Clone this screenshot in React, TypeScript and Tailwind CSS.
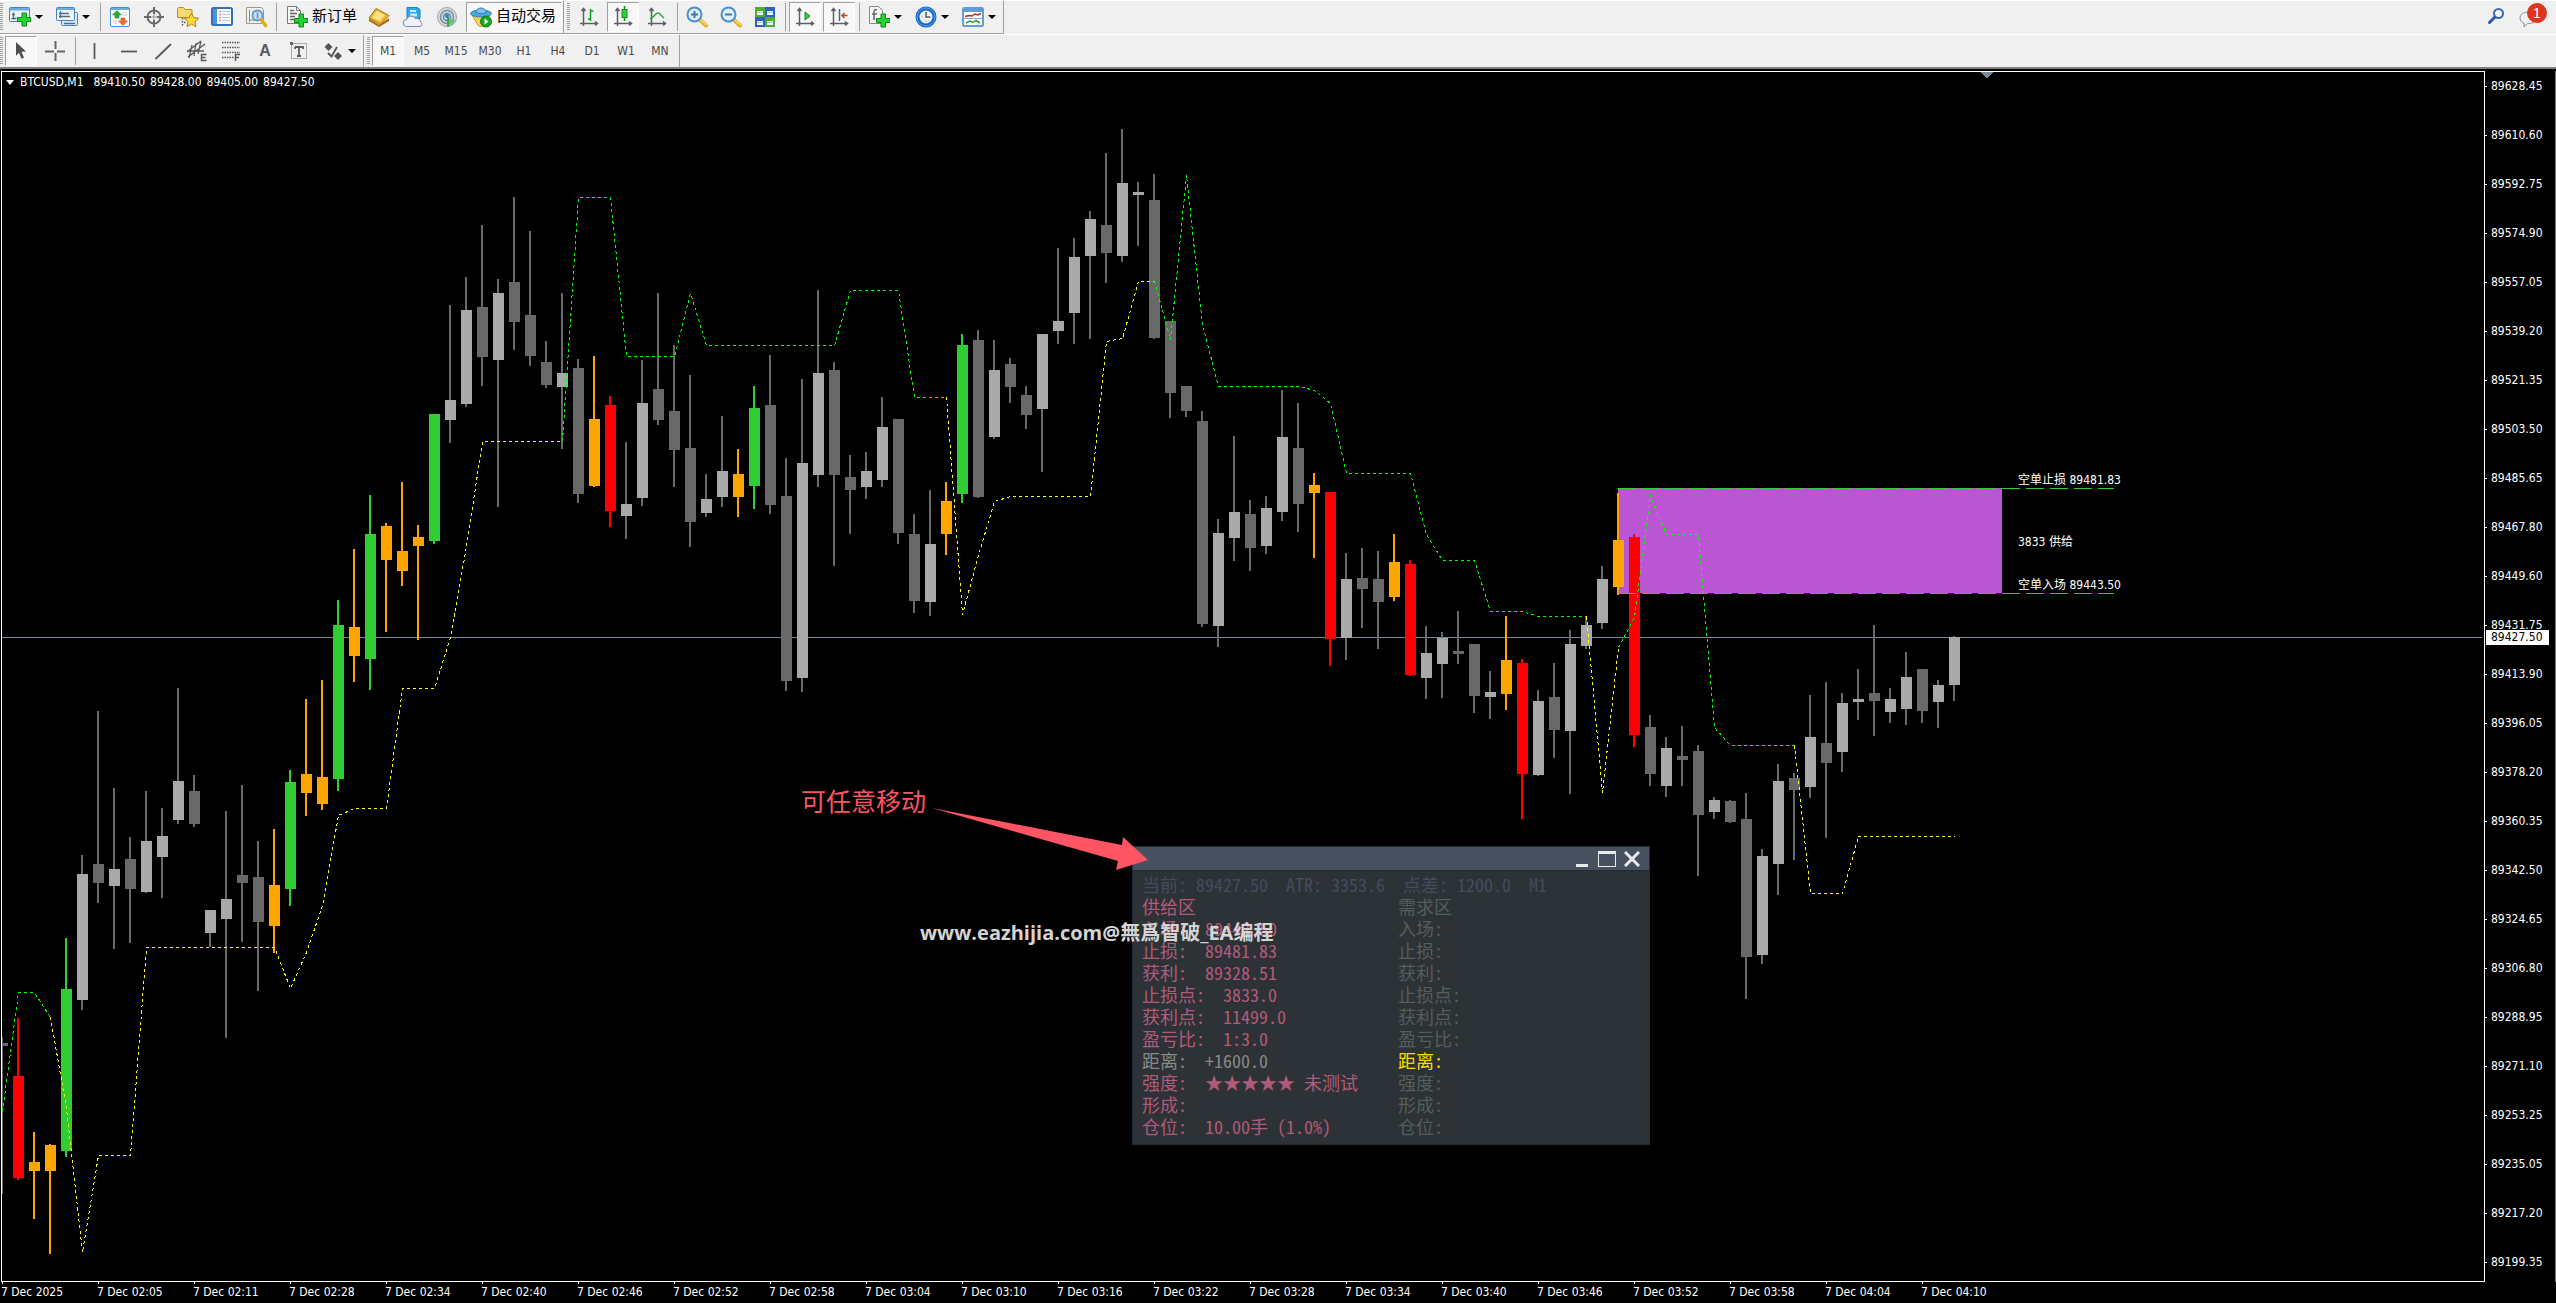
import React from "react";
import clsx from "clsx";

type CandleKind = "up" | "down" | "bull" | "bear" | "wait";
// kind, high, low, body top, body bottom
type Candle = [CandleKind, number, number, number, number];

interface TrailSegment {
  side: "sell" | "buy";
  points: [number, number][];
}

interface PanelRow {
  label: string;
  value: string;
  supplyClass: string;
  demandClass: string;
}

const BAR_STEP = 16;

const candles: Candle[] = [
  ["down", 1037, 1194, 1043, 1046],
  ["bear", 1018, 1180, 1076, 1178],
  ["wait", 1132, 1219, 1162, 1171],
  ["wait", 1144, 1254, 1145, 1171],
  ["bull", 938, 1157, 989, 1151],
  ["up", 855, 1010, 874, 1000],
  ["down", 711, 903, 864, 883],
  ["up", 788, 949, 869, 886],
  ["down", 837, 943, 859, 889],
  ["up", 791, 893, 841, 892],
  ["up", 808, 898, 836, 857],
  ["up", 688, 824, 781, 820],
  ["down", 775, 827, 791, 824],
  ["up", 910, 947, 910, 933],
  ["up", 811, 1038, 899, 919],
  ["down", 785, 942, 875, 883],
  ["down", 841, 991, 877, 922],
  ["wait", 829, 953, 885, 926],
  ["bull", 770, 906, 782, 889],
  ["wait", 699, 816, 774, 793],
  ["wait", 680, 810, 777, 804],
  ["bull", 600, 791, 625, 779],
  ["wait", 549, 682, 627, 656],
  ["bull", 495, 690, 534, 659],
  ["wait", 523, 632, 526, 560],
  ["wait", 482, 586, 551, 571],
  ["wait", 525, 640, 537, 546],
  ["bull", 414, 544, 414, 541],
  ["up", 305, 443, 400, 420],
  ["up", 277, 407, 310, 404],
  ["down", 225, 386, 307, 357],
  ["up", 279, 507, 293, 360],
  ["down", 197, 350, 282, 322],
  ["down", 231, 366, 315, 356],
  ["down", 341, 388, 362, 385],
  ["up", 293, 449, 373, 387],
  ["down", 359, 503, 368, 494],
  ["wait", 356, 487, 419, 486],
  ["bear", 396, 527, 405, 511],
  ["up", 442, 539, 504, 516],
  ["up", 360, 506, 403, 498],
  ["down", 293, 425, 389, 420],
  ["down", 345, 487, 411, 450],
  ["down", 375, 547, 448, 522],
  ["up", 474, 517, 499, 513],
  ["up", 416, 507, 471, 497],
  ["wait", 449, 517, 474, 497],
  ["bull", 386, 509, 408, 486],
  ["down", 355, 514, 405, 505],
  ["down", 458, 691, 496, 681],
  ["up", 379, 692, 463, 678],
  ["up", 290, 487, 373, 475],
  ["down", 362, 566, 370, 475],
  ["down", 455, 534, 477, 490],
  ["up", 452, 499, 471, 487],
  ["up", 397, 487, 427, 480],
  ["down", 419, 544, 419, 533],
  ["down", 514, 613, 534, 601],
  ["up", 490, 616, 544, 602],
  ["wait", 482, 555, 501, 534],
  ["bull", 334, 503, 345, 494],
  ["down", 330, 498, 340, 497],
  ["up", 340, 439, 370, 437],
  ["down", 358, 403, 364, 387],
  ["down", 386, 429, 395, 415],
  ["up", 334, 472, 334, 409],
  ["up", 248, 344, 321, 331],
  ["up", 238, 344, 257, 313],
  ["up", 211, 339, 219, 256],
  ["down", 153, 283, 225, 253],
  ["up", 129, 262, 183, 256],
  ["up", 182, 246, 192, 195],
  ["down", 174, 339, 200, 338],
  ["down", 321, 418, 321, 393],
  ["down", 386, 417, 386, 411],
  ["down", 411, 627, 421, 624],
  ["up", 519, 647, 533, 626],
  ["up", 436, 561, 512, 538],
  ["down", 500, 571, 514, 548],
  ["up", 496, 554, 508, 546],
  ["up", 390, 521, 437, 512],
  ["down", 403, 532, 448, 504],
  ["wait", 473, 558, 485, 493],
  ["bear", 492, 666, 492, 639],
  ["up", 553, 660, 579, 638],
  ["down", 548, 628, 578, 589],
  ["down", 551, 649, 579, 602],
  ["wait", 534, 601, 562, 597],
  ["bear", 560, 676, 564, 675],
  ["up", 626, 699, 653, 678],
  ["up", 632, 698, 638, 664],
  ["down", 611, 664, 651, 654],
  ["down", 644, 713, 644, 696],
  ["up", 671, 719, 692, 697],
  ["wait", 616, 710, 660, 694],
  ["bear", 659, 819, 663, 774],
  ["up", 690, 776, 701, 775],
  ["down", 663, 758, 697, 730],
  ["up", 630, 794, 644, 731],
  ["up", 616, 649, 625, 646],
  ["up", 566, 629, 579, 623],
  ["wait", 493, 595, 540, 587],
  ["bear", 534, 747, 537, 735],
  ["down", 715, 786, 727, 774],
  ["up", 737, 797, 748, 786],
  ["down", 726, 786, 756, 760],
  ["down", 745, 876, 751, 815],
  ["up", 797, 819, 800, 812],
  ["down", 800, 823, 801, 822],
  ["down", 793, 999, 819, 957],
  ["up", 849, 964, 856, 955],
  ["up", 764, 895, 781, 864],
  ["down", 773, 860, 778, 790],
  ["up", 695, 798, 737, 787],
  ["down", 682, 838, 743, 763],
  ["up", 693, 772, 703, 752],
  ["up", 669, 720, 699, 702],
  ["down", 625, 736, 693, 701],
  ["up", 688, 723, 699, 712],
  ["up", 652, 725, 677, 709],
  ["down", 669, 723, 669, 711],
  ["up", 680, 728, 685, 702],
  ["up", 636, 701, 637, 685],
];

const bodyClass: Record<CandleKind, string> = {
  up: "fill-[#a9a9a9]",
  down: "fill-[#696969]",
  bull: "fill-[#32cd32]",
  bear: "fill-[#ff0000]",
  wait: "fill-[#ffa500]",
};

const wickClass: Record<CandleKind, string> = {
  ...bodyClass,
  up: "fill-[#696969]",
};

// Trailing stop, points are [bar index, y]
const trail: TrailSegment[] = [
  { side: "sell", points: [[0, 1111], [1, 992], [2, 992], [3, 1017]] },
  {
    side: "buy",
    points: [
      [3, 1017], [4, 1108], [5, 1252], [6, 1155], [8, 1155], [9, 947], [17, 947], [18, 988], [19, 952], [20, 905],
      [21, 815], [22, 808], [24, 808], [25, 688], [27, 688], [28, 637], [29, 546], [30, 441], [35, 441],
    ],
  },
  {
    side: "sell",
    points: [
      [35, 441], [36, 197], [38, 197], [39, 356], [42, 356], [43, 293], [44, 345], [52, 345], [53, 290], [56, 290],
      [57, 397], [59, 397],
    ],
  },
  {
    side: "buy",
    points: [
      [59, 397], [60, 614], [61, 555], [62, 501], [63, 496], [68, 496], [69, 341], [70, 338], [71, 281], [72, 281],
    ],
  },
  {
    side: "sell",
    points: [
      [72, 281], [73, 339], [74, 175], [75, 324], [76, 386], [81, 386], [82, 390], [83, 403], [84, 473], [88, 473],
      [89, 534], [90, 560], [92, 560], [93, 611], [95, 611], [96, 616], [99, 616],
    ],
  },
  { side: "buy", points: [[99, 616], [100, 792], [101, 647]] },
  {
    side: "sell",
    points: [[101, 647], [102, 617], [103, 495], [104, 534], [106, 534], [107, 727], [108, 745], [112, 745]],
  },
  { side: "buy", points: [[112, 745], [113, 893], [115, 893], [116, 836], [122, 836]] },
];

const prices = [
  "89628.45", "89610.60", "89592.75", "89574.90", "89557.05", "89539.20", "89521.35", "89503.50", "89485.65",
  "89467.80", "89449.60", "89431.75", "89413.90", "89396.05", "89378.20", "89360.35", "89342.50", "89324.65",
  "89306.80", "89288.95", "89271.10", "89253.25", "89235.05", "89217.20", "89199.35",
];

const times = [
  "2025", "02:05", "02:11", "02:28", "02:34", "02:40", "02:46", "02:52", "02:58", "03:04", "03:10", "03:16", "03:22",
  "03:28", "03:34", "03:40", "03:46", "03:52", "03:58", "04:04", "04:10",
];

const timeframes = ["M1", "M5", "M15", "M30", "H1", "H4", "D1", "W1", "MN"];

const PINK = "text-[#b35a7b]";
const MUTED = "text-[#545e5b]";

const panelRows: PanelRow[] = [
  { label: "入场:", value: "89443.50", supplyClass: PINK, demandClass: MUTED },
  { label: "止损:", value: "89481.83", supplyClass: PINK, demandClass: MUTED },
  { label: "获利:", value: "89328.51", supplyClass: PINK, demandClass: MUTED },
  { label: "止损点:", value: "3833.0", supplyClass: PINK, demandClass: MUTED },
  { label: "获利点:", value: "11499.0", supplyClass: PINK, demandClass: MUTED },
  { label: "盈亏比:", value: "1:3.0", supplyClass: PINK, demandClass: MUTED },
  { label: "距离:", value: "+1600.0", supplyClass: "text-[#898985]", demandClass: "text-[#ffd700]" },
  { label: "强度:", value: "★★★★★ 未测试", supplyClass: PINK, demandClass: MUTED },
  { label: "形成:", value: "", supplyClass: PINK, demandClass: MUTED },
  { label: "仓位:", value: "10.00手 (1.0%)", supplyClass: PINK, demandClass: MUTED },
];

/* ---------- toolbar icons ---------- */

const Icon: React.FC<{ children: React.ReactNode }> = ({ children }) => (
  <svg viewBox="0 0 22 22" className="size-[22px] shrink-0" fill="none" aria-hidden="true">
    {children}
  </svg>
);

const Plus: React.FC = () => (
  <path d="M13 7h4.500v4.500h4.500v4h-4.500v4.500H13v-4.500H8.500v-4H13z" fill="#22d432" stroke="#0b8a16" strokeWidth="1" />
);

const NewChartIcon = () => (
  <Icon>
    <rect x="0.500" y="1.500" width="20" height="14" rx="1" fill="#eaf4ff" stroke="#3f86c8" />
    <path d="M1 2h19v2.500H1z" fill="#6aaae2" />
    <path d="M4.500 6.500v7M2.500 12.500h5M3 8.500h3" stroke="#56697f" strokeWidth="1.300" />
    <Plus />
  </Icon>
);

const ProfilesIcon = () => (
  <Icon>
    <rect x="5.500" y="6.500" width="16" height="13" rx="1" fill="#d6e8f8" stroke="#3f86c8" />
    <rect x="0.500" y="1.500" width="18" height="13" rx="1" fill="#eef6ff" stroke="#3f86c8" />
    <path d="M1 2h17v2H1z" fill="#6aaae2" />
    <path d="M4.500 5v7M3 7.500h10M3 10.500h11M8 17.500h11" stroke="#56697f" strokeWidth="1.300" />
  </Icon>
);

const MarketWatchIcon = () => (
  <Icon>
    <rect x="1.500" y="1.500" width="19" height="19" rx="1.500" fill="#fff" stroke="#4a90d0" />
    <path d="M2 2h18v2H2z" fill="#6aaae2" />
    <path d="M8 4.500l4.500 4.500H10v3H6V9H3.500z" fill="#27b02e" stroke="#128018" strokeWidth="0.500" />
    <path d="M14 19.500L9.500 15H12v-3h4v3h2.500z" fill="#f26a2e" stroke="#c03f10" strokeWidth="0.500" />
    <path d="M13 7h5M13 9h5M4 15h4M4 17h4" stroke="#c6cdd6" />
  </Icon>
);

const DataWindowIcon = () => (
  <Icon>
    <circle cx="11" cy="11" r="6.500" stroke="#6a6a6a" strokeWidth="2" />
    <path d="M11 1v7M11 14v7M1 11h7M14 11h7" stroke="#6a6a6a" strokeWidth="2" />
    <path d="M11 8v6M8 11h6" stroke="#9a9a9a" />
  </Icon>
);

const FolderStarIcon = () => (
  <Icon>
    <path d="M0.500 2.500l1-1h5l1.500 2h7v8H0.500z" fill="#f5d970" stroke="#bf921f" />
    <path d="M5.500 12v9M7 16.500h3" stroke="#555" strokeWidth="1.500" strokeDasharray="1.500 1.500" />
    <path
      d="M14.500 7l2.200 4.600 5 .6-3.700 3.400 1 5-4.500-2.500-4.500 2.500 1-5-3.700-3.400 5-.6z"
      fill="#ffd93a"
      stroke="#b97f10"
    />
  </Icon>
);

const NavigatorIcon = () => (
  <Icon>
    <rect x="1" y="2" width="20" height="17" rx="1.500" fill="#f7fbff" stroke="#2f72b8" strokeWidth="2" />
    <path d="M2 3h4v15H2z" fill="#4e93d6" />
    <path d="M8.500 5.500h1M8.500 8.500h1M8.500 11.500h1M8.500 14.500h1" stroke="#d33" strokeWidth="1.500" />
    <path d="M11 5.500h8M11 8.500h8M11 11.500h8M11 14.500h8" stroke="#b7c8da" />
  </Icon>
);

const TesterIcon = () => (
  <Icon>
    <path d="M1.500 1.500h15l2 2v14h-17z" fill="#f0f0ea" stroke="#9a9a90" />
    <path d="M4.500 4v12M8 5v6M4 14h6" stroke="#888" />
    <circle cx="12.500" cy="9.500" r="5" fill="#c4e0f6" stroke="#5f98c6" strokeWidth="1.800" />
    <path d="M12.500 6.500v6" stroke="#6d8aa5" strokeWidth="1.500" />
    <path d="M16.500 14l4 5.500" stroke="#e0a91e" strokeWidth="3.500" strokeLinecap="round" />
  </Icon>
);

const NewOrderIcon = () => (
  <Icon>
    <path d="M1.500 0.500h9l4 4v13h-13z" fill="#f6f6f6" stroke="#7a7a7a" />
    <path d="M10.500 0.500v4h4" stroke="#7a7a7a" />
    <path d="M4 4.500h4M4 7.500h7M4 10.500h5M4 13.500h4" stroke="#666" strokeWidth="1.300" />
    <g transform="translate(0 1)">
      <Plus />
    </g>
  </Icon>
);

const GoldIcon = () => (
  <Icon>
    <path d="M1 12.500l10 6.500 10-7v3l-10 6-10-6z" fill="#a86c0a" />
    <path d="M1 12l7-9.500 13 7-9 9z" fill="#eeb82c" stroke="#a86c0a" />
    <path d="M4 11.500l5-6.500 8 4-5 6z" fill="#fbe08a" />
  </Icon>
);

const CloudIcon = () => (
  <Icon>
    <path d="M5 1.500h10l3 2v9H5z" fill="#33a7ee" stroke="#1880c8" />
    <path d="M8 4h6v2H8zM8 7.500h7v3H8z" fill="#c6ebff" />
    <path
      d="M4.500 20.500a3.500 3.500 0 01.3-7 4.500 4.500 0 018.400-1 4 4 0 015.300 3.700 2.300 2.300 0 01-.5 4.300z"
      fill="#eef2f9"
      stroke="#7a8bab"
    />
  </Icon>
);

const SignalIcon = () => (
  <Icon>
    <circle cx="11" cy="11" r="9.500" fill="#d5dadd" stroke="#9aa4aa" />
    <circle cx="11" cy="11" r="6.500" stroke="#7d93a0" strokeWidth="1.500" />
    <circle cx="11" cy="11" r="3.500" stroke="#5a8ea0" strokeWidth="1.500" />
    <path d="M11 11l8.500 3.500a9 9 0 01-7.500 6z" fill="#5ec06a" opacity="0.700" />
    <path d="M12 11v9.500" stroke="#2a9a3a" strokeWidth="1.500" />
    <circle cx="11" cy="10" r="2" fill="#3e78c8" />
  </Icon>
);

const AutoTradeIcon = () => (
  <Icon>
    <path d="M2 9h18l-6 10c-1 2-5 2-6 0z" fill="#f6d65a" stroke="#c99a25" />
    <ellipse cx="11" cy="7.500" rx="10.500" ry="3.500" fill="#4fa8dc" stroke="#2c7fb5" />
    <path d="M6 6.500c0-6 10-6 10 0-2 1.500-8 1.500-10 0z" fill="#7cc4ec" stroke="#2c7fb5" />
    <circle cx="16" cy="15.500" r="5.500" fill="#19a51f" stroke="#0c7a12" />
    <path d="M14.500 12.500l4 3-4 3z" fill="#fff" />
  </Icon>
);

const Axes = () => (
  <path
    d="M5.500 20V3M3.500 5l2-2.500 2 2.500M2 17.500h17M17 15.500l2.500 2-2.500 2"
    stroke="#5f5f5f"
    strokeWidth="1.500"
  />
);

const BarsIcon = () => (
  <Icon>
    <Axes />
    <path d="M12.500 3v12M12.500 5h3M10 13h2.500" stroke="#159a25" strokeWidth="1.500" />
  </Icon>
);

const CandlesIcon = () => (
  <Icon>
    <Axes />
    <path d="M12.500 0v15" stroke="#0f8a1d" strokeWidth="1.500" />
    <rect x="10" y="3.500" width="5" height="8" fill="#2fd43c" stroke="#0f8a1d" />
  </Icon>
);

const LineIcon = () => (
  <Icon>
    <Axes />
    <path d="M4 13c4-1 5-6 8-6 2 0 3 3 6 5" stroke="#2ba63a" strokeWidth="1.500" />
  </Icon>
);

const ZoomIcon: React.FC<{ plus?: boolean }> = ({ plus }) => (
  <Icon>
    <path d="M14 14l6 5.500" stroke="#e0b020" strokeWidth="4" strokeLinecap="round" />
    <path d="M14 13.500l6.500 5.500" stroke="#f8e070" strokeWidth="1.500" />
    <circle cx="8.500" cy="8.500" r="7" fill="#dff0fc" stroke="#4a90cc" strokeWidth="2" />
    <path d="M5 8.500h7" stroke="#3c78b0" strokeWidth="2" />
    {plus && <path d="M8.500 5v7" stroke="#3c78b0" strokeWidth="2" />}
  </Icon>
);

const TilesIcon = () => (
  <Icon>
    <path d="M1 1h10v10H1zM11 11h10v10H11z" fill="#4fae2a" />
    <path d="M11 1h10v10H11zM1 11h10v10H1z" fill="#2e62c8" />
    <path d="M3 5h6v4H3zM13 5h6v4h-6zM3 15h6v4H3zM13 15h6v4h-6z" fill="#f0f6fa" />
    <path d="M3 6.500h6M13 6.500h6M3 16.500h6M13 16.500h6" stroke="#b8c8d8" />
  </Icon>
);

const AutoScrollIcon = () => (
  <Icon>
    <Axes />
    <path d="M11 6l5 4-5 4z" fill="#3ed04a" stroke="#128a20" />
  </Icon>
);

const ShiftIcon = () => (
  <Icon>
    <Axes />
    <path d="M11.500 3v12" stroke="#2b6ca8" strokeWidth="1.500" />
    <path d="M13.500 9.500h6M16.500 7l-2.500 2.500 2.500 2.500" stroke="#c8421a" strokeWidth="1.500" />
  </Icon>
);

const IndicatorsIcon = () => (
  <Icon>
    <path d="M1.500 0.500h9l4 4v13h-13z" fill="#f6f6f6" stroke="#8a8a8a" />
    <path d="M9 4c-2-1-3 0-3 2v8M4 8h5" stroke="#666" strokeWidth="1.500" />
    <g transform="translate(0 1)">
      <Plus />
    </g>
  </Icon>
);

const ClockIcon = () => (
  <Icon>
    <circle cx="11" cy="11" r="8.500" fill="#f4f8fc" stroke="#1c68c8" strokeWidth="4" />
    <circle cx="11" cy="11" r="9" stroke="#4fa0f0" strokeWidth="1" />
    <path d="M11 6v5h4.500" stroke="#555" strokeWidth="1.500" />
    <path d="M11 14.500V16M6.500 11H8" stroke="#999" />
  </Icon>
);

const TemplateIcon = () => (
  <Icon>
    <rect x="1" y="2" width="20" height="18" rx="1" fill="#fff" stroke="#3a80c4" strokeWidth="1.500" />
    <path d="M1 2h20v4H1z" fill="#5a9ede" />
    <path d="M1 12.500h20" stroke="#7aa8d4" />
    <path d="M3 10.500l4-1 3 .5 3-2 3 1 3-1.500" stroke="#a8301c" strokeWidth="1.500" />
    <path d="M4 17l4-2 3 1.500 3-2 4 2.500" stroke="#2f9a3a" strokeWidth="1.500" />
  </Icon>
);

const CursorIcon = () => (
  <Icon>
    <path d="M6 2l10 9.500-4.500.3 2.500 6-2.500 1-2.500-6-3 3z" fill="#4f4f4f" />
  </Icon>
);

const CrosshairIcon = () => (
  <Icon>
    <path d="M11.500 1v8M11.500 13v8M1 11.500h9M13 11.500h8" stroke="#666" strokeWidth="2" />
  </Icon>
);

const StrokeIcon: React.FC<{ d: string }> = ({ d }) => (
  <Icon>
    <path d={d} stroke="#5a5a5a" strokeWidth="1.800" />
  </Icon>
);

const ChannelIcon = () => (
  <Icon>
    <path d="M1 12L15 1M2 17L19 4M6 5l-3 13M10 3L8 16M15 1l-3 13M1 11h17" stroke="#5a5a5a" strokeWidth="1.300" />
    <path d="M20.500 14.500h-5v6h5M15.500 17.500h4" stroke="#5a5a5a" strokeWidth="1.500" />
  </Icon>
);

const FibIcon = () => (
  <Icon>
    <path d="M2 2.500h18M2 7.500h18M2 12.500h18M2 17.500h12" stroke="#5a5a5a" strokeWidth="1.500" strokeDasharray="1.500 1" />
    <path d="M20 14.500h-4.500V21M15.500 17.500H19" stroke="#5a5a5a" strokeWidth="1.500" />
  </Icon>
);

const TextIcon = () => (
  <span className="font-['Liberation_Sans'] text-base leading-4 font-bold text-[#5a5a5a]">A</span>
);

const LabelIcon = () => (
  <Icon>
    <rect x="3.500" y="3.500" width="15" height="15" stroke="#666" strokeDasharray="1 1" />
    <path d="M2 2h3v3H2z" fill="#666" />
    <path d="M7 7h8v2M7 9V7M11 7v9M9 16h4" stroke="#5a5a5a" strokeWidth="1.800" />
  </Icon>
);

const ArrowsIcon = () => (
  <Icon>
    <path d="M6.500 3l4 4-4 4-4-4zM16 12l4 4-4 4-4-4z" fill="#555" />
    <path d="M6 13l3.500 3.500L15 7" stroke="#555" strokeWidth="1.800" />
  </Icon>
);

/* ---------- toolbar parts ---------- */

const Gripper = () => (
  <span className="h-7 w-[3px] bg-[repeating-linear-gradient(to_bottom,#a0a0a0_0,#a0a0a0_1px,transparent_1px,transparent_2px)]" />
);

const Separator = () => <span className="mr-0.5 ml-[3px] h-7 w-px bg-[#a0a0a0]" />;

const ToolButton: React.FC<{ label: string; pressed?: boolean; children: React.ReactNode }> = ({
  label,
  pressed,
  children,
}) => (
  <button
    type="button"
    aria-label={label}
    className={clsx(
      "mx-px flex h-[30px] w-8 items-center justify-center border",
      pressed ? "border-t-[#a0a0a0] border-r-white border-b-white border-l-[#a0a0a0] bg-[#f8f8f8]" : "border-transparent"
    )}
  >
    {children}
  </button>
);

const DropButton: React.FC<{ label: string; children: React.ReactNode }> = ({ label, children }) => (
  <button type="button" aria-label={label} className="flex h-[30px] w-[47px] items-center gap-1 pl-1.5">
    {children}
    <svg viewBox="0 0 8 4" className="h-1 w-2" aria-hidden="true">
      <path d="M0 0h8L4 4z" />
    </svg>
  </button>
);

const Toolbar: React.FC = () => (
  <header className="border-t border-t-white border-b-2 border-b-[#808080] bg-[#f0f0f0]">
    <div className="flex justify-between">
      <div className="flex h-[33px] items-center border-r border-b border-[#a0a0a0]">
        <Gripper />
        <DropButton label="新图表"><NewChartIcon /></DropButton>
        <DropButton label="配置文件"><ProfilesIcon /></DropButton>
        <Separator />
        <ToolButton label="市场报价"><MarketWatchIcon /></ToolButton>
        <ToolButton label="数据窗口"><DataWindowIcon /></ToolButton>
        <ToolButton label="收藏夹"><FolderStarIcon /></ToolButton>
        <ToolButton label="导航"><NavigatorIcon /></ToolButton>
        <ToolButton label="策略测试"><TesterIcon /></ToolButton>
        <Separator />
        <button
          type="button"
          className="flex h-[30px] w-[83px] items-center gap-1 pl-[7px] text-[15px] whitespace-nowrap"
        >
          <NewOrderIcon />
          新订单
        </button>
        <ToolButton label="编辑器"><GoldIcon /></ToolButton>
        <ToolButton label="云服务"><CloudIcon /></ToolButton>
        <ToolButton label="信号"><SignalIcon /></ToolButton>
        <button
          type="button"
          className="ml-0.5 flex h-[30px] w-24 items-center gap-1 border border-t-[#a0a0a0] border-r-white border-b-white border-l-[#a0a0a0] bg-[#f8f8f8] pl-[3px] text-[15px] whitespace-nowrap"
        >
          <AutoTradeIcon />
          自动交易
        </button>
        <span className="mr-[3px] ml-px h-full w-px bg-[#a0a0a0]" />
        <Gripper />
        <span className="w-0.5" />
        <ToolButton label="柱状图"><BarsIcon /></ToolButton>
        <ToolButton label="阴阳烛" pressed><CandlesIcon /></ToolButton>
        <ToolButton label="折线图"><LineIcon /></ToolButton>
        <Separator />
        <ToolButton label="放大"><ZoomIcon plus /></ToolButton>
        <ToolButton label="缩小"><ZoomIcon /></ToolButton>
        <ToolButton label="平铺"><TilesIcon /></ToolButton>
        <Separator />
        <ToolButton label="自动滚动" pressed><AutoScrollIcon /></ToolButton>
        <ToolButton label="图表平移" pressed><ShiftIcon /></ToolButton>
        <Separator />
        <DropButton label="指标"><IndicatorsIcon /></DropButton>
        <DropButton label="时间周期"><ClockIcon /></DropButton>
        <DropButton label="模板"><TemplateIcon /></DropButton>
      </div>
      <div className="flex items-start gap-3 pr-[9px]">
        <button type="button" aria-label="搜索" className="mt-1">
          <Icon>
            <circle cx="13.500" cy="8.500" r="4.500" fill="#f4f8ff" stroke="#3c62b8" strokeWidth="2" />
            <path d="M10 12l-5.500 5.500" stroke="#2c55b4" strokeWidth="3" strokeLinecap="round" />
          </Icon>
        </button>
        <button type="button" aria-label="消息" className="relative h-7 w-7">
          <svg viewBox="0 0 28 28" className="size-7" fill="none" aria-hidden="true">
            <path
              d="M9 11c-5 0-8 3-8 6s2 4.500 4 5v4l3.500-3.500c6 0 10-2 10-5.500S14 11 9 11z"
              fill="#f4f4f8"
              stroke="#8a8a96"
            />
          </svg>
          <span className="absolute top-0.5 right-0 flex size-5 items-center justify-center rounded-full bg-[#dd3520] font-['Liberation_Sans'] text-sm leading-5 text-white">
            1
          </span>
        </button>
      </div>
    </div>
    <div className="flex h-[33px] items-center border-t border-t-white">
      <Gripper />
      <span className="w-px" />
      <ToolButton label="光标" pressed><CursorIcon /></ToolButton>
      <ToolButton label="十字准线"><CrosshairIcon /></ToolButton>
      <Separator />
      <ToolButton label="垂直线"><StrokeIcon d="M10.500 3v16" /></ToolButton>
      <ToolButton label="水平线"><StrokeIcon d="M3 11.500h16" /></ToolButton>
      <ToolButton label="趋势线"><StrokeIcon d="M3.500 19L19 4" /></ToolButton>
      <ToolButton label="等距通道"><ChannelIcon /></ToolButton>
      <ToolButton label="斐波那契"><FibIcon /></ToolButton>
      <ToolButton label="文本"><TextIcon /></ToolButton>
      <ToolButton label="文本标签"><LabelIcon /></ToolButton>
      <DropButton label="箭头"><ArrowsIcon /></DropButton>
      <span className="mr-[3px] h-full w-px bg-[#a0a0a0]" />
      <Gripper />
      <span className="w-px" />
      {timeframes.map((tf) => (
        <ToolButton key={tf} label={tf} pressed={tf === "M1"}>
          <span className="text-xs text-[#4a4a4a]">{tf}</span>
        </ToolButton>
      ))}
      <span className="ml-0.5 h-full w-px bg-[#a0a0a0]" />
    </div>
  </header>
);

/* ---------- chart ---------- */

const barX = (index: number) => index * BAR_STEP;

const Chart: React.FC = () => (
  <svg className="absolute inset-0 size-full" shapeRendering="crispEdges" role="img" aria-label="BTCUSD M1">
    <g transform="translate(-2 -72)">
      <rect x="1618" y="488" width="384" height="105" className="fill-[#ba55d3]" />
      <rect x="0" y="637" width="100%" height="1" className="fill-[#778899]" />
      {candles.map(([kind, high, low, top, bottom], i) => (
        <g key={i}>
          <rect x={barX(i) + 1} y={high} width="2" height={low - high} className={wickClass[kind]} />
          <rect x={barX(i) - 3} y={top} width="11" height={bottom - top} className={bodyClass[kind]} />
        </g>
      ))}
      <g className="stroke-[#32cd32]" strokeDasharray="18 6">
        <path d="M1618 488.500H2114" />
        <path d="M1618 593.500H2114" />
      </g>
      {trail.map(({ side, points }, i) => (
        <polyline
          key={i}
          points={points.map(([bar, y]) => `${barX(bar) + 2.5},${y + 0.5}`).join(" ")}
          fill="none"
          strokeDasharray="3 3"
          className={side === "sell" ? "stroke-[#00ff00]" : "stroke-[#ffff00]"}
        />
      ))}
      <path d="M1980 72h13l-6 6z" className="fill-[#778899]" />
      <g className="fill-white text-xs">
        <text x="2018" y="484">空单止损 89481.83</text>
        <text x="2018" y="546">3833 供给</text>
        <text x="2018" y="589">空单入场 89443.50</text>
      </g>
    </g>
  </svg>
);

const ZonePanel: React.FC = () => (
  <section className="absolute top-[774px] left-[1130px] w-[518px] border border-[#252b33] bg-[#2d3236]">
    <div className="flex h-6 items-center justify-end gap-2 border-b border-[#252b33] bg-[#47505f] pr-[9px] text-[#e8eaed]">
      <button type="button" aria-label="最小化">
        <svg viewBox="0 0 16 16" className="size-4 fill-current">
          <path d="M2 13h12v3H2z" />
        </svg>
      </button>
      <button type="button" aria-label="最大化">
        <svg viewBox="0 0 18 16" className="h-4 w-[18px] fill-current">
          <path fillRule="evenodd" d="M0 0h18v16H0zM1 3v12h16V3z" />
        </svg>
      </button>
      <button type="button" aria-label="关闭">
        <svg viewBox="0 0 16 16" className="size-4 stroke-current">
          <path d="M1 1l14 14M15 1L1 15" strokeWidth="3" />
        </svg>
      </button>
    </div>
    {/* half-width Latin forms keep the values on the Chinese character grid */}
    <div className="pt-0.5 pb-[7px] pl-[9px] font-['Noto_Sans_CJK_SC',sans-serif] text-lg leading-[22px] font-normal whitespace-pre [font-feature-settings:'hwid']">
      <p className="text-[#434c5e]">{"当前: 89427.50  ATR: 3353.6  点差: 1200.0  M1"}</p>
      <div className="flex">
        <div className="w-64">
          <p className={PINK}>供给区</p>
          {panelRows.map((row) => (
            <p key={row.label} className={row.supplyClass}>{`${row.label}  ${row.value}`}</p>
          ))}
        </div>
        <div>
          <p className={MUTED}>需求区</p>
          {panelRows.map((row) => (
            <p key={row.label} className={row.demandClass}>{row.label}</p>
          ))}
        </div>
      </div>
    </div>
  </section>
);

const Annotation: React.FC = () => (
  <div className="pointer-events-none">
    <p className="absolute top-[713px] left-[799px] text-[25px] leading-9 text-[#ff5464]">可任意移动</p>
    <svg className="absolute top-[736px] left-[930px] h-[64px] w-[218px]" viewBox="0 0 218 64" aria-hidden="true">
      <path d="M0 0L190 37 191 29 216 52 184 62 186 53z" fill="#ff5464" />
    </svg>
    <p className="absolute top-[847px] left-[918px] font-['Open_Sans','Noto_Sans_CJK_SC',sans-serif] text-xl leading-7 font-bold whitespace-nowrap text-[#d4d4d4]">
      www.eazhijia.com@無爲智破_EA编程
    </p>
  </div>
);

const PriceAxis: React.FC = () => (
  <aside className="relative flex w-[71px] flex-col gap-[33px] border-r border-[#808080] pt-[7px]">
    {prices.map((price) => (
      <div key={price} className="flex h-4 items-center gap-1">
        <span className="h-px w-0.5 bg-white" />
        {price}
      </div>
    ))}
    <div className="absolute top-[559px] left-px w-[63px] bg-white pl-[5px] leading-[15px] text-black">89427.50</div>
  </aside>
);

const App: React.FC = () => {
  return (
    <div className="flex h-screen flex-col overflow-hidden bg-black font-['DejaVu_Sans_Condensed','Noto_Sans_CJK_SC',sans-serif] text-xs text-black">
      <Toolbar />
      <main className="flex min-h-0 flex-1 flex-col pt-0.5 pl-px text-white">
        <div className="flex min-h-0 flex-1">
          <div className="relative min-w-0 flex-1 overflow-hidden border border-white">
            <Chart />
            <div className="absolute top-0.5 left-1 flex items-center gap-1.5 leading-4">
              <svg viewBox="0 0 8 5" className="h-[5px] w-2 fill-white" aria-hidden="true">
                <path d="M0 0h8L4 5z" />
              </svg>
              <h1 className="flex gap-2.5 whitespace-pre">
                <span>BTCUSD,M1</span>
                <span className="flex gap-[5px]">
                  {["89410.50", "89428.00", "89405.00", "89427.50"].map((quote) => (
                    <span key={quote}>{quote}</span>
                  ))}
                </span>
              </h1>
            </div>
            <ZonePanel />
            <Annotation />
          </div>
          <PriceAxis />
        </div>
        <div className="flex h-[21px]">
          {times.map((time) => (
            <div key={time} className="w-24 shrink-0">
              <span className="ml-px block h-0.5 w-px bg-white" />
              <span className="block leading-4">7 Dec {time}</span>
            </div>
          ))}
        </div>
      </main>
    </div>
  );
};

export default App;
